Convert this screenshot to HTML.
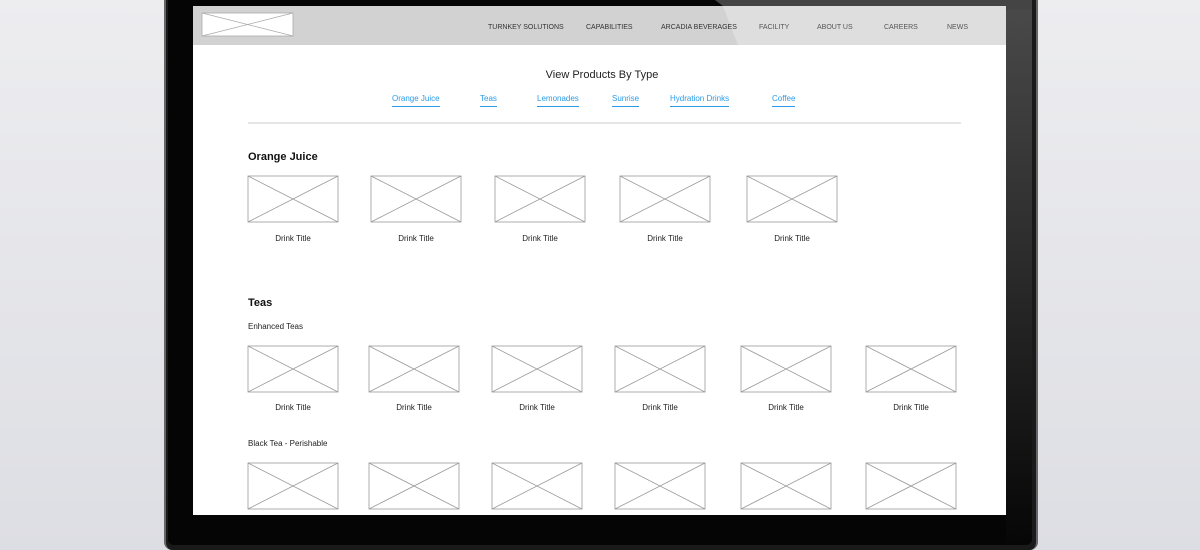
<!DOCTYPE html>
<html><head><meta charset="utf-8"><style>
body{margin:0;width:1200px;height:550px;overflow:hidden;background:linear-gradient(#ededf0,#dddee3);font-family:"Liberation Sans",Arial,sans-serif;position:relative}
.a{position:absolute}
.t{position:absolute;white-space:nowrap;font-size:8px;color:#222}
.lk{position:absolute;font-size:8px;color:#2b9be8;border-bottom:1px solid #2b9be8;padding-bottom:3px;white-space:nowrap}
.nav{position:absolute;top:24px;font-size:7px;color:#333;white-space:nowrap}
.c{transform:translateX(-50%)}
</style></head><body>
<div class="a" style="left:164px;top:0;width:870px;height:550px;background:#1a1a1a;border-radius:0 0 8px 8px;border-left:2px solid #666;border-right:2px solid #666"></div>
<div class="a" style="left:168px;top:0;width:864px;height:545px;background:#050505;border-radius:0 0 6px 6px"></div>
<svg class="a" style="left:168px;top:0" width="864" height="545"><defs><linearGradient id="g" x1="0" y1="0" x2="0" y2="1"><stop offset="0" stop-color="#4a4a4a"/><stop offset="0.5" stop-color="#2a2a2a"/><stop offset="1" stop-color="#060606"/></linearGradient></defs><polygon points="547,0 864,0 864,540 858,545 838,545 838,0" fill="url(#g)"/><polygon points="547,0 864,0 864,10 560,10" fill="#444"/></svg>
<div class="a" style="left:193px;top:6px;width:813px;height:509px;background:#fff;overflow:hidden">
 <div class="a" style="left:0;top:0;width:813px;height:39px;background:#d2d2d2"></div>
 <svg class="a" style="left:0;top:0" width="813" height="39"><polygon points="530,0 813,0 813,39 545,39" fill="#dedede"/></svg>
</div>
<svg class="a" style="left:0;top:0" width="1200" height="550" fill="none" stroke="#aaa" stroke-width="0.8">
<rect x="202" y="13" width="91" height="23" fill="#fff"/><path d="M202 13L293 36M293 13L202 36"/>
<path d="M248 123H961" stroke="#bbb"/>
</svg>
<svg class="a" style="left:0;top:0" width="1200" height="550" fill="none" stroke="#999" stroke-width="0.8">
<defs><g id="x"><rect x="0" y="0" width="90" height="46" fill="#fff"/><path d="M0 0L90 46M90 0L0 46"/></g></defs>
<use href="#x" x="248" y="176"/><use href="#x" x="371" y="176"/><use href="#x" x="495" y="176"/><use href="#x" x="620" y="176"/><use href="#x" x="747" y="176"/>
<use href="#x" x="248" y="346"/><use href="#x" x="369" y="346"/><use href="#x" x="492" y="346"/><use href="#x" x="615" y="346"/><use href="#x" x="741" y="346"/><use href="#x" x="866" y="346"/>
<use href="#x" x="248" y="463"/><use href="#x" x="369" y="463"/><use href="#x" x="492" y="463"/><use href="#x" x="615" y="463"/><use href="#x" x="741" y="463"/><use href="#x" x="866" y="463"/>
</svg>
<div class="a" style="left:193px;top:515px;width:813px;height:30px;background:#050505"></div>
<div class="nav" style="left:488px">TURNKEY SOLUTIONS</div>
<div class="nav" style="left:586px">CAPABILITIES</div>
<div class="nav" style="left:661px">ARCADIA BEVERAGES</div>
<div class="nav" style="left:759px;color:#555">FACILITY</div>
<div class="nav" style="left:817px;color:#555">ABOUT US</div>
<div class="nav" style="left:884px;color:#555">CAREERS</div>
<div class="nav" style="left:947px;color:#555">NEWS</div>
<div class="t c" style="left:602px;top:69px;font-size:11px">View Products By Type</div>
<div class="lk" style="left:392px;top:94px">Orange Juice</div>
<div class="lk" style="left:480px;top:94px">Teas</div>
<div class="lk" style="left:537px;top:94px">Lemonades</div>
<div class="lk" style="left:612px;top:94px">Sunrise</div>
<div class="lk" style="left:670px;top:94px">Hydration Drinks</div>
<div class="lk" style="left:772px;top:94px">Coffee</div>
<div class="t" style="left:248px;top:151px;font-size:11px;font-weight:bold;color:#111">Orange Juice</div>
<div class="t c" style="left:293px;top:234px">Drink Title</div>
<div class="t c" style="left:416px;top:234px">Drink Title</div>
<div class="t c" style="left:540px;top:234px">Drink Title</div>
<div class="t c" style="left:665px;top:234px">Drink Title</div>
<div class="t c" style="left:792px;top:234px">Drink Title</div>
<div class="t" style="left:248px;top:297px;font-size:11px;font-weight:bold;color:#111">Teas</div>
<div class="t" style="left:248px;top:322px">Enhanced Teas</div>
<div class="t c" style="left:293px;top:403px">Drink Title</div>
<div class="t c" style="left:414px;top:403px">Drink Title</div>
<div class="t c" style="left:537px;top:403px">Drink Title</div>
<div class="t c" style="left:660px;top:403px">Drink Title</div>
<div class="t c" style="left:786px;top:403px">Drink Title</div>
<div class="t c" style="left:911px;top:403px">Drink Title</div>
<div class="t" style="left:248px;top:439px">Black Tea - Perishable</div>
</body></html>
